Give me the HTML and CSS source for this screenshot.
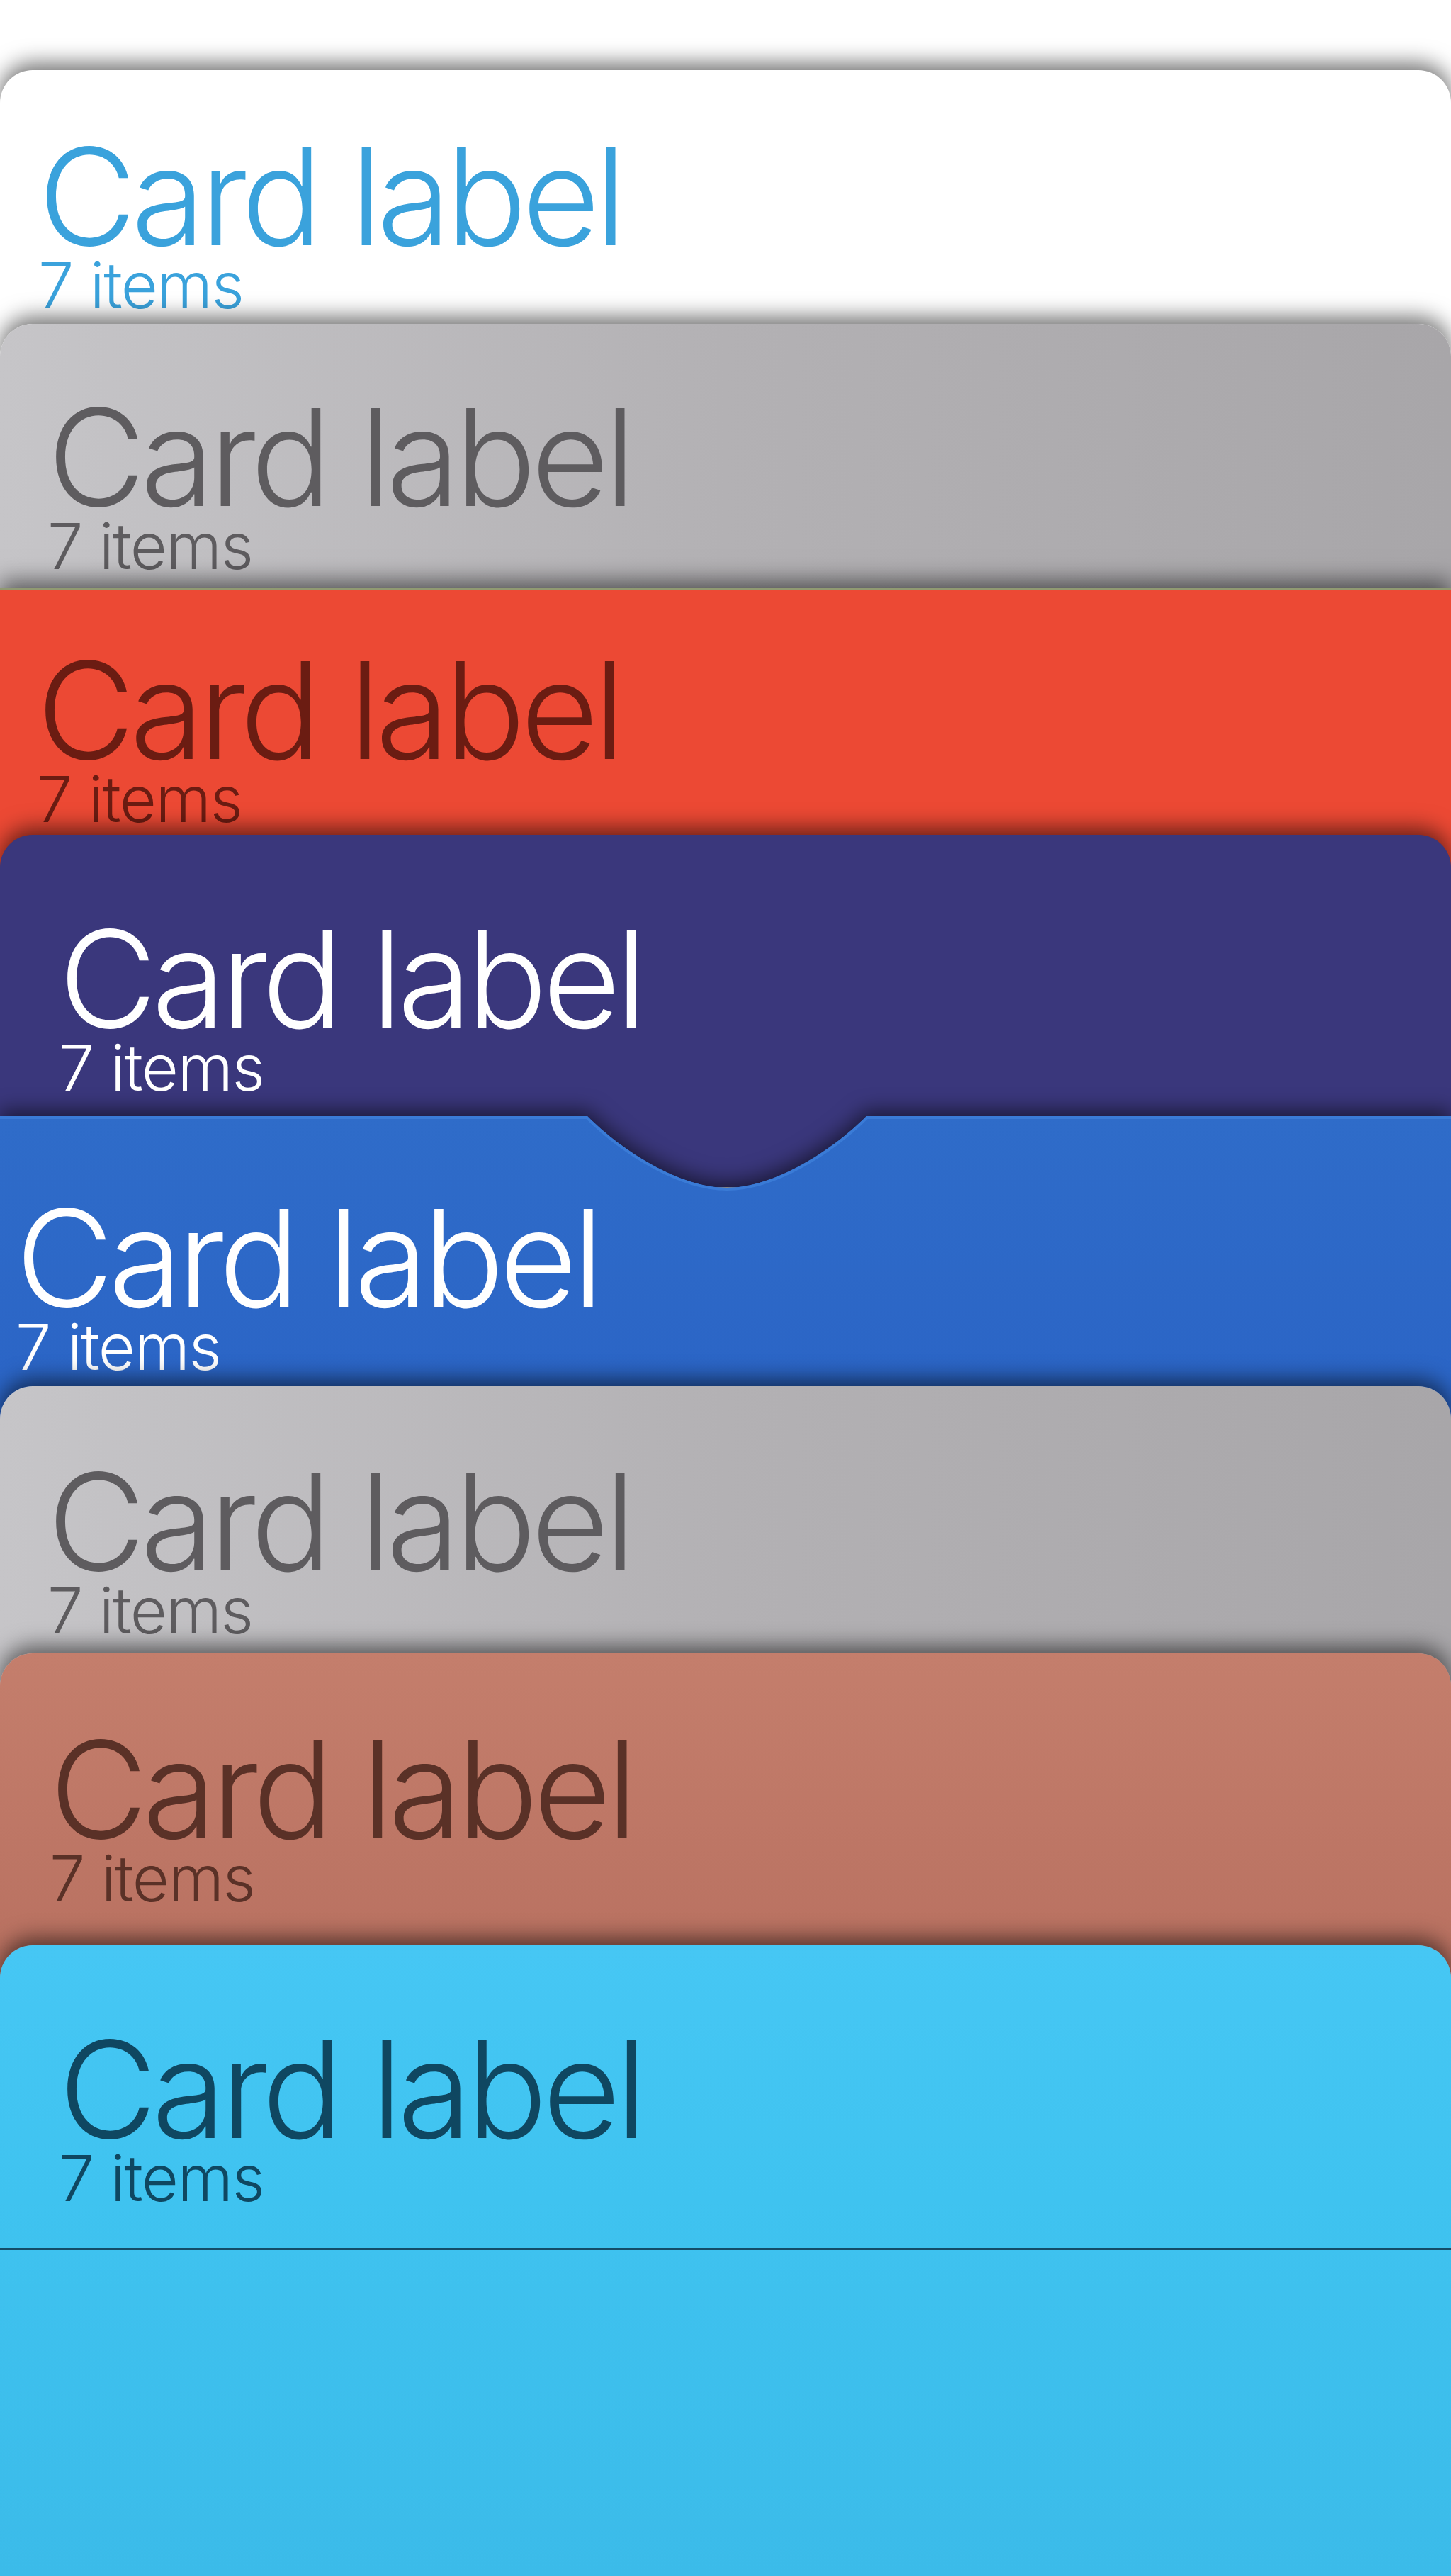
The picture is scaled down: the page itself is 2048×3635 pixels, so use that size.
FILE: index.html
```html
<!DOCTYPE html>
<html lang="en">
<head>
<meta charset="utf-8">
<title>Cards</title>
<link rel="stylesheet" href="styles.css">
</head>
<body>
<main class="stack">
  <section class="card card--rounded card--white">
    <h2 class="card__label">Card label</h2>
    <p class="card__count">7 items</p>
  </section>

  <section class="card card--rounded card--silver card--s2">
    <h2 class="card__label">Card label</h2>
    <p class="card__count">7 items</p>
  </section>

  <section class="card card--red">
    <h2 class="card__label">Card label</h2>
    <p class="card__count">7 items</p>
  </section>

  <section class="card card--rounded card--indigo">
    <h2 class="card__label">Card label</h2>
    <p class="card__count">7 items</p>
  </section>

  <div class="pocket">
    <section class="card card--blue">
      <svg class="pocket__rim" width="2048" height="120" viewBox="0 0 2048 120" aria-hidden="true">
        <path d="M0 0 H829 C879 50 960 101 1026 101 C1092 101 1173 50 1223 0 H2048" fill="none" stroke="#3a7bd6" stroke-width="8"/>
      </svg>
      <h2 class="card__label">Card label</h2>
      <p class="card__count">7 items</p>
    </section>
  </div>

  <section class="card card--rounded card--silver card--s6">
    <h2 class="card__label">Card label</h2>
    <p class="card__count">7 items</p>
  </section>

  <section class="card card--rounded card--clay">
    <h2 class="card__label">Card label</h2>
    <p class="card__count">7 items</p>
  </section>

  <section class="card card--rounded card--sky">
    <header class="card__head">
      <h2 class="card__label">Card label</h2>
      <p class="card__count">7 items</p>
    </header>
    <div class="card__body"></div>
  </section>
</main>
</body>
</html>
```

FILE: styles.css
```css
html, body {
  margin: 0;
  padding: 0;
  background: #ffffff;
}

body {
  font-family: "Inter", "Helvetica Neue", "Liberation Sans", sans-serif;
  -webkit-font-smoothing: antialiased;
}

.stack {
  padding-top: 99px;
  height: 3635px;
  box-sizing: border-box;
  overflow: hidden;
}

/* every card tucks its bottom under the next one */
.card {
  position: relative;
  box-sizing: border-box;
  margin-bottom: -100px;
  box-shadow: 0 -10px 30px rgba(0, 0, 0, 0.55);
}

.card--rounded {
  border-radius: 46px 46px 0 0;
}

.card__label {
  margin: 0;
  font-size: 190px;
  line-height: 170px;
  font-weight: 300;
  letter-spacing: -7px;
  white-space: nowrap;
}

.card__count {
  margin: 0;
  font-size: 90px;
  line-height: 82px;
  font-weight: 300;
  letter-spacing: -1.5px;
  white-space: nowrap;
}

/* 1 — white */
.card--white {
  height: 458px;
  padding: 93px 0 0 54px;
  background: #ffffff;
  color: #3aa2dc;
}

/* 2 / 6 — silver */
.card--silver {
  background: linear-gradient(90deg, #c6c5c8 0%, #b3b1b4 50%, #a8a6a9 100%);
  color: #5e5c5f;
}

.card--s2 {
  height: 473px;
  padding: 103px 0 0 67px;
}

.card--s6 {
  height: 477px;
  padding: 106px 0 0 67px;
}

/* 3 — red */
.card--red {
  height: 448px;
  padding: 85px 0 0 52px;
  background: #ec4934;
  border-top: 2px solid #909a72;
  color: #6b1c12;
}

/* 4 — indigo */
.card--indigo {
  height: 497px;
  padding: 118px 0 0 83px;
  background: #3a377c;
  color: #ffffff;
}

/* 5 — blue pocket with a thumb notch */
.pocket {
  position: relative;
  margin-bottom: -100px;
  filter: drop-shadow(0 -8px 14px rgba(0, 0, 0, 0.55));
}

.card--blue {
  height: 481px;
  margin-bottom: 0;
  padding: 115px 0 0 22px;
  background: linear-gradient(180deg, #2f6cc9 0%, #2a63c5 100%);
  color: #ffffff;
  box-shadow: none;
  clip-path: path("M0 0 H829 C879 50 960 101 1026 101 C1092 101 1173 50 1223 0 H2048 V481 H0 Z");
}

.pocket__rim {
  position: absolute;
  top: 0;
  left: 0;
}

/* 7 — clay */
.card--clay {
  height: 512px;
  padding: 107px 0 0 70px;
  background: linear-gradient(180deg, #c47e6c 0%, #b76f5f 100%);
  color: #5a3127;
}

/* 8 — sky, the open card */
.card--sky {
  height: 890px;
  margin-bottom: 0;
  background: linear-gradient(180deg, #46c7f4 0%, #3fc3f0 40%, #3bbbe9 100%);
  color: #0f4761;
}

.card__head {
  box-sizing: border-box;
  height: 430px;
  padding: 118px 0 0 83px;
  border-bottom: 3px solid #144c68;
}

.card__body {
  height: 460px;
}
```
